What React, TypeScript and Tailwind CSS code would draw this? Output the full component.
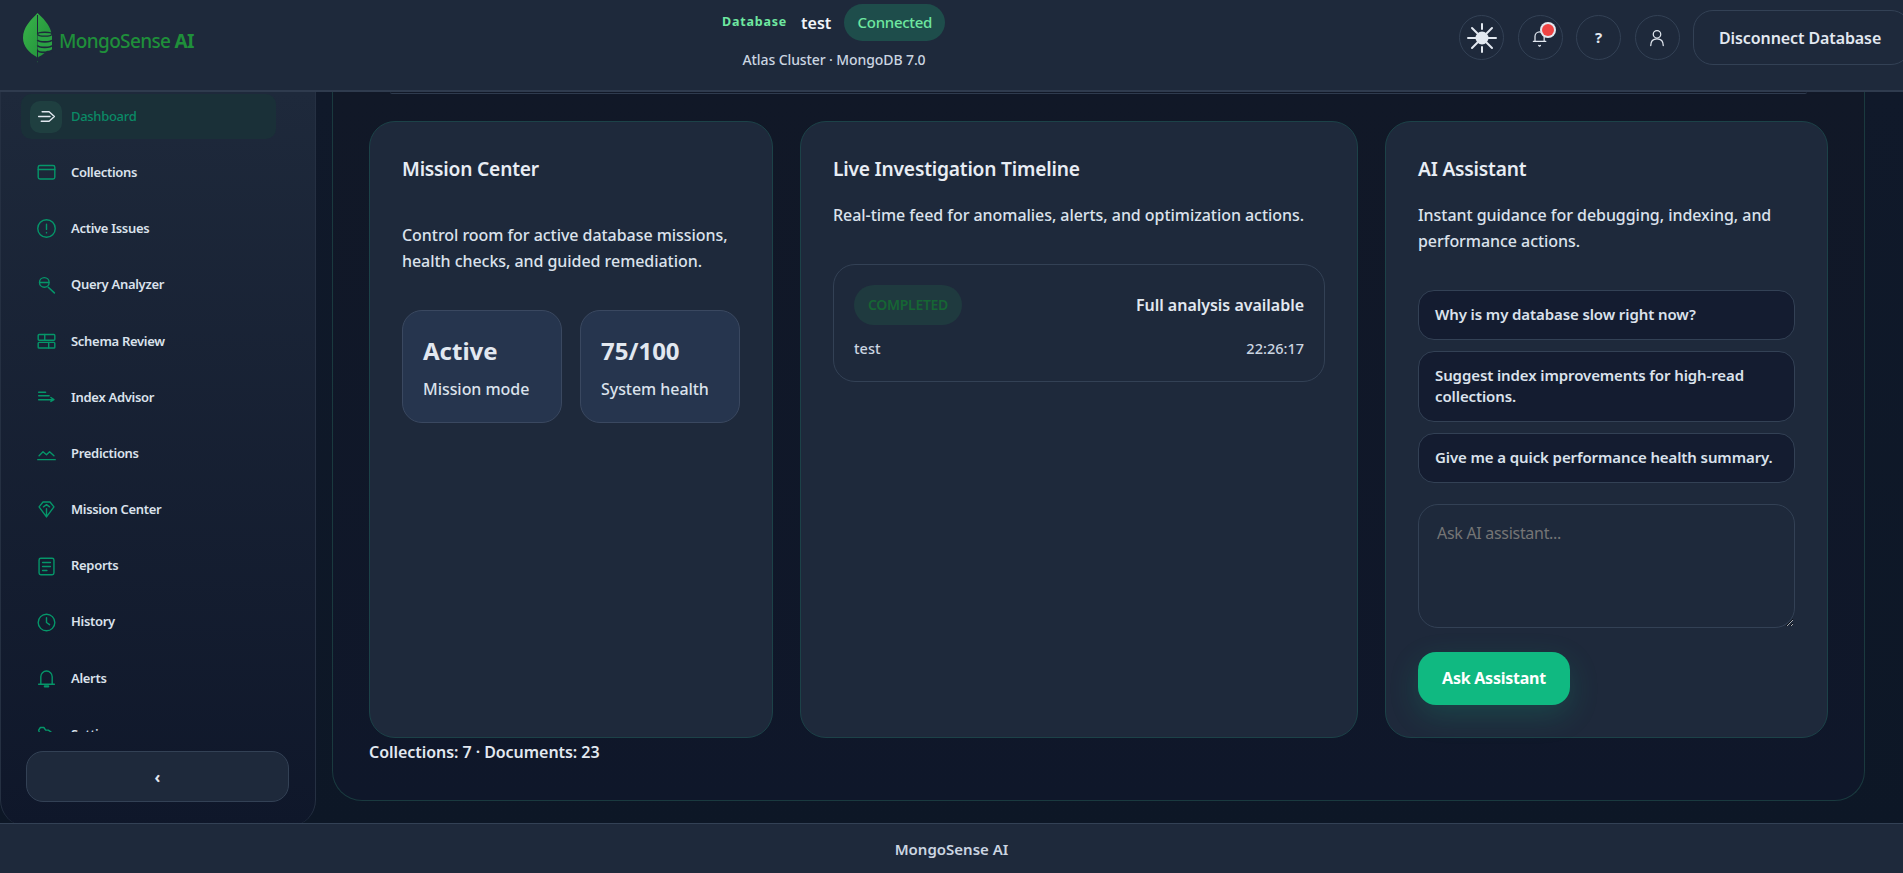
import React from 'react';

const Icon: React.FC<{ size?: number; className?: string; strokeWidth?: number; children: React.ReactNode }> = ({ size = 22, className, strokeWidth = 1.6, children }) => (
  <svg width={size} height={size} viewBox="0 0 24 24" fill="none" stroke="currentColor" strokeWidth={strokeWidth} strokeLinecap="round" strokeLinejoin="round" className={className}>
    {children}
  </svg>
);

const navItems: { label: string; icon: React.ReactNode }[] = [
  { label: 'Dashboard', icon: <><path d="M7 6.500h8M3 12h13M6 17.500h9M15 6.500l6 5.500-6 5.500" /></> },
  { label: 'Collections', icon: <><rect x="2.500" y="4" width="19" height="15.500" rx="2" /><path d="M2.500 8.500h19" /></> },
  { label: 'Active Issues', icon: <><circle cx="12" cy="12" r="10" /><path d="M12 7v6M12 16.500v.5" /></> },
  { label: 'Query Analyzer', icon: <><circle cx="9.500" cy="8.500" r="5.500" /><path d="M4.500 8.500h10M14 14l7 6.500" strokeWidth={1.800} /></> },
  { label: 'Schema Review', icon: <><rect x="2.500" y="4" width="19" height="6.500" rx="1" /><rect x="2.500" y="13" width="19" height="6.500" rx="1" /><path d="M10 4v6.500M14.500 13v6.500" /></> },
  { label: 'Index Advisor', icon: <><path d="M3 6h8M3 10h12M3 14.500h17M17 12l3.500 2.500-3.500 2" /></> },
  { label: 'Predictions', icon: <><path d="M2 19h20M3.500 14.500 8 10l4 3.500 3.500-3.500 5 4.500" /></> },
  { label: 'Mission Center', icon: <><path d="M8 3.500h8L20.500 9 12 20.500 3.500 9zM12 11v9M8.500 9 12 6.500 15.500 9" /></> },
  { label: 'Reports', icon: <><rect x="3.500" y="2.500" width="17" height="19" rx="2" /><path d="M7.500 7.500h9M7.500 12h9M7.500 16.500h5" /></> },
  { label: 'History', icon: <><circle cx="12" cy="12" r="9.500" /><path d="M12 6.500V12l3.500 2.500" /></> },
  { label: 'Alerts', icon: <><path d="M3 18.500h18M5.500 18.500V10a6.500 6.500 0 0 1 13 0v8.500" /><path d="M10 21h4" strokeWidth={2.400} /></> },
  { label: 'Settings', icon: <><path d="M3 7l2-3h4l2 3h3l3 2 3 3-8 1H5z" /></> },
];

const Logo = () => (
  <svg width="32" height="52" viewBox="0 0 32 52" className="shrink-0">
    <defs>
      <linearGradient id="leaf" x1="0" y1="0" x2="1" y2="1">
        <stop offset="0" stopColor="#3ab54a" />
        <stop offset="1" stopColor="#1d8a38" />
      </linearGradient>
    </defs>
    <path d="M15.500 1C9 8 1 15 1 26c0 8 6 15 13.800 19l.7 6 .7-6c4-2 8-4.500 11-9l2-16C27 12 21 6 15.500 1z" fill="url(#leaf)" />
    <path d="M15.500 3v46" stroke="#1e293b" strokeWidth="1" />
    <path d="M15.500 22c0-2.400 14.500-2.400 14.500 0v15c0 2.600-14.500 2.600-14.500 0z" fill="#2aa043" />
    <path d="M15.500 22.200c1 2.600 13.500 2.600 14.500 0M15.500 22c0-2.400 14.500-2.400 14.500 0" stroke="#1e293b" strokeWidth="1.400" fill="none" />
    <path d="M15.500 28c1 2.600 13.500 2.600 14.500 0M15.500 33.500c1 2.600 13.500 2.600 14.500 0M15.500 38.500c1 2.600 13.500 2.600 14.500 0" stroke="#1e293b" strokeWidth="1.700" fill="none" />
  </svg>
);

const Header = () => (
  <header className="h-[92px] shrink-0 flex items-start bg-[#1e293b] border-b-2 border-[#2f3b4e] overflow-hidden relative z-10">
    <div className="w-[722px] shrink-0 pl-[22px] pt-[12px] flex items-start gap-[5px]">
      <Logo />
      <div className="text-[19px] leading-[28px] mt-[15px] text-[#1f8f3a] font-medium tracking-[-0.65px] whitespace-nowrap">
        MongoSense <span className="font-bold">AI</span>
      </div>
    </div>
    <div className="w-[224px] shrink-0 flex flex-col items-center pt-[4px]">
      <div className="flex items-center w-full">
        <span className="text-[12.500px] font-bold tracking-[0.8px] text-[#6ee7a0]">Database</span>
        <span className="ml-[14px] text-[16px] font-semibold text-[#f1f5f9]">test</span>
        <span className="ml-[13px] h-[37px] w-[101px] rounded-full bg-[#1e4d4b] flex items-center justify-center text-[15px] font-medium tracking-[-0.3px] text-[#6ee7a0]">Connected</span>
      </div>
      <div className="mt-[9px] text-[14px] leading-[20px] font-medium tracking-[-0.1px] text-[#cbd5e1] whitespace-nowrap">Atlas Cluster · MongoDB 7.0</div>
    </div>
    <div className="ml-auto flex items-center gap-[13.500px] mt-[10px] -mr-[8px]">
      <div className="w-[45px] h-[45px] rounded-full border border-[#334155] flex items-center justify-center text-[#e2e8f0]">
        <svg width="30" height="30" viewBox="0 0 30 30" stroke="currentColor" strokeWidth="2" strokeLinecap="round" fill="none">
          <circle cx="15" cy="15" r="6.500" fill="currentColor" stroke="none" />
          <path d="M15 1v5M15 24v5M1 15h28M5 5l20 20M25 5 5 25" />
        </svg>
      </div>
      <div className="relative w-[45px] h-[45px] rounded-full border border-[#334155] flex items-center justify-center text-[#e2e8f0]">
        <Icon size={20} strokeWidth={1.500}>
          <path d="M4 16h15M6 16v-6a5.500 5.500 0 0 1 11 0v6M10.500 21l1 .8 1-.8" />
        </Icon>
        <span className="absolute top-[8px] right-[8px] w-[12px] h-[12px] rounded-full bg-[#ef4444] ring-2 ring-[#e2e8f0]" />
      </div>
      <div className="w-[45px] h-[45px] rounded-full border border-[#334155] flex items-center justify-center text-[15px] font-bold text-[#e2e8f0]">?</div>
      <div className="w-[45px] h-[45px] rounded-full border border-[#334155] flex items-center justify-center text-[#e2e8f0]">
        <Icon size={20} strokeWidth={1.500}>
          <circle cx="12" cy="7.500" r="4.500" />
          <path d="M4.500 21c0-5 3-8 7.500-8s7.500 3 7.500 8" />
        </Icon>
      </div>
      <button className="h-[55px] w-[218px] rounded-[20px] border border-[#334155] pl-[25px] text-left text-[16px] font-semibold tracking-[-0.1px] text-[#e2e8f0] whitespace-nowrap">Disconnect Database</button>
    </div>
  </header>
);

const Sidebar = () => (
  <aside className="w-[316px] h-[734px] shrink-0 flex flex-col bg-gradient-to-b from-[#1e293b] to-[#0f172a] border-x border-[#253042] rounded-b-[26px]">
    <nav className="h-[640px] overflow-hidden flex flex-col gap-[11.200px] ml-[20px] w-[255px] pt-[2px]">
      {navItems.map((item, i) => (
        <div key={item.label} className={`h-[45px] shrink-0 flex items-center gap-[9px] pl-[9px] rounded-[10px] ${i === 0 ? 'bg-[#1a3038]' : ''}`}>
          <span className={`w-[32px] h-[32px] shrink-0 rounded-[10px] flex items-center justify-center ${i === 0 ? 'bg-[#1f3f40] text-[#e2e8f0]' : 'text-[#059669]'}`}>
            <Icon size={21}>{item.icon}</Icon>
          </span>
          <span className={`text-[13px] tracking-[-0.3px] ${i === 0 ? 'font-medium text-[#0a8a66]' : 'font-semibold text-[#dbe2ec]'}`}>{item.label}</span>
        </div>
      ))}
    </nav>
    <button className="mt-[19px] ml-[25px] w-[263px] h-[51px] shrink-0 rounded-[17px] bg-[#1e293b] border border-[#334155] text-[16px] font-bold leading-none text-[#e2e8f0]">‹</button>
  </aside>
);

const Card: React.FC<{ title: string; children: React.ReactNode }> = ({ title, children }) => (
  <section className="h-[617px] rounded-[26px] bg-[#1e293b] border border-[#1c4248] p-[32px]">
    <h2 className="text-[19.200px] leading-[32px] -mt-[1.500px] font-semibold tracking-[-0.2px] text-[#e8edf4]">{title}</h2>
    {children}
  </section>
);

const StatBox: React.FC<{ value: string; label: string }> = ({ value, label }) => (
  <div className="w-[161px] h-[113px] rounded-[20px] bg-[#26354e] border border-[#3a4860] pl-[20px] pt-[24px]">
    <div className="text-[24px] leading-[32px] font-bold text-[#e2e8f0]">{value}</div>
    <div className="mt-[10px] text-[16px] leading-[24px] font-medium tracking-[-0.05px] text-[#dbe2ec]">{label}</div>
  </div>
);

const suggestions = [
  'Why is my database slow right now?',
  'Suggest index improvements for high-read collections.',
  'Give me a quick performance health summary.',
];

export default function App() {
  return (
    <div className="h-[873px] w-[1903px] overflow-hidden flex flex-col bg-[#0f1526] [font-family:'Noto_Sans',sans-serif]">
      <Header />
      <div className="h-[731px] shrink-0 flex overflow-hidden bg-gradient-to-b from-[#10192a] to-[#0d1726]">
        <Sidebar />
        <main className="ml-[16px] w-[1533px] h-[709px] shrink-0 rounded-b-[30px] border-x border-b border-[#1a3a3f] bg-gradient-to-b from-[#111827] to-[#0f172a] px-[36px]">
          <div className="h-[2px] mx-[21px] rounded-b-[12px] border-b border-[#2f3b4e]" />
          <div className="mt-[27px] grid grid-cols-[404px_558px_443px] gap-[27px]">
            <Card title="Mission Center">
              <p className="mt-[37px] text-[16px] leading-[26px] font-medium tracking-[-0.05px] text-[#dbe2ec]">
                Control room for active database missions, health checks, and guided remediation.
              </p>
              <div className="mt-[36px] flex gap-[18px]">
                <StatBox value="Active" label="Mission mode" />
                <StatBox value="75/100" label="System health" />
              </div>
            </Card>
            <Card title="Live Investigation Timeline">
              <p className="mt-[17px] text-[16px] leading-[26px] font-medium tracking-[-0.05px] text-[#dbe2ec]">
                Real-time feed for anomalies, alerts, and optimization actions.
              </p>
              <div className="mt-[36px] h-[118px] rounded-[22px] border border-[#334155] px-[20px] pt-[20px]">
                <div className="flex items-center justify-between">
                  <span className="w-[108px] h-[40px] rounded-full bg-[#1f3a3f] flex items-center justify-center text-[14px] font-semibold tracking-[-0.3px] text-[#166534]">COMPLETED</span>
                  <span className="text-[16px] font-semibold tracking-[-0.02px] text-[#e2e8f0]">Full analysis available</span>
                </div>
                <div className="mt-[11px] flex items-center justify-between text-[14.500px] leading-[24px] font-medium text-[#cbd5e1]">
                  <span>test</span>
                  <span>22:26:17</span>
                </div>
              </div>
            </Card>
            <Card title="AI Assistant">
              <p className="mt-[17px] text-[16px] leading-[26px] font-medium tracking-[-0.05px] text-[#dbe2ec]">
                Instant guidance for debugging, indexing, and performance actions.
              </p>
              <div className="mt-[36px] flex flex-col gap-[11px]">
                {suggestions.map((s) => (
                  <button key={s} className="rounded-[16px] bg-[#141c30] border border-[#334155] px-[16px] py-[13.500px] text-left text-[15px] leading-[21px] font-semibold tracking-[-0.1px] text-[#dbe2ec]">{s}</button>
                ))}
              </div>
              <textarea
                placeholder="Ask AI assistant..."
                className="mt-[21px] block w-full h-[124px] rounded-[20px] border border-[#334155] bg-transparent px-[18px] py-[16px] text-[16px] tracking-[-0.3px] outline-none placeholder:text-[#757575]"
              />
              <button className="mt-[24px] w-[152px] h-[53px] rounded-[18px] bg-[#10b981] text-[16px] font-bold tracking-[-0.25px] text-white shadow-[0_10px_30px_rgba(16,185,129,0.2)]">Ask Assistant</button>
            </Card>
          </div>
          <div className="mt-[2px] text-[16px] leading-[24px] font-semibold tracking-[-0.05px] text-[#e2e8f0]">Collections: 7 · Documents: 23</div>
        </main>
      </div>
      <footer className="h-[50px] shrink-0 flex items-center justify-center pt-[2px] bg-[#1e293b] border-t border-[#334155] text-[15px] font-semibold text-[#cbd5e1] relative z-10">
        MongoSense AI
      </footer>
    </div>
  );
}
